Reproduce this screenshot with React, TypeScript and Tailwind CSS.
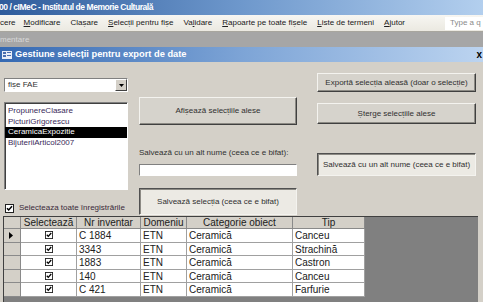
import React from 'react';

const rows = [
  { nr: 'C 1884', dom: 'ETN', cat: 'Ceramică', tip: 'Canceu' },
  { nr: '3343', dom: 'ETN', cat: 'Ceramică', tip: 'Strachină' },
  { nr: '1883', dom: 'ETN', cat: 'Ceramică', tip: 'Castron' },
  { nr: '140', dom: 'ETN', cat: 'Ceramică', tip: 'Canceu' },
  { nr: 'C 421', dom: 'ETN', cat: 'Ceramică', tip: 'Farfurie' },
];

const selections = ['PropunereClasare', 'PicturiGrigorescu', 'CeramicaExpozitie', 'BijuteriiArticol2007'];

const CheckMark = ({ size = 9 }: { size?: number }) => (
  <svg width={size} height={size} viewBox="0 0 9 9">
    <rect x="0.5" y="0.5" width="8" height="8" fill="#fff" stroke="#202020" />
    <path d="M2 4.2 L3.7 6 L7 2.3" fill="none" stroke="#000" strokeWidth="1.5" />
  </svg>
);

const RaisedButton = ({ label, className }: { label: string; className: string }) => (
  <div
    className={`flex items-center justify-center border border-t-[#f4f3ef] border-l-[#f4f3ef] border-b-[#404040] border-r-[#404040] bg-[#d6d3cc] text-[8px] text-[#303030] shadow-[inset_-1px_-1px_0_#8c8a84] ${className}`}
  >
    {label}
  </div>
);

const PressedButton = ({ label, className }: { label: string; className: string }) => (
  <div
    className={`flex items-center justify-center border border-t-[#505050] border-l-[#505050] border-b-[#f4f3ef] border-r-[#f4f3ef] bg-[#eceae4] text-[8px] text-[#303030] shadow-[inset_1px_1px_0_#8c8a84] ${className}`}
  >
    {label}
  </div>
);

export default function App() {
  return (
    <div
      className="flex h-[302px] w-[483px] flex-col overflow-hidden bg-[#d4d0c8]"
      style={{ fontFamily: '"Liberation Sans", Arial, sans-serif' }}
    >
      {/* app title bar */}
      <div className="flex h-[15px] items-center bg-gradient-to-r from-[#2f5c9c] via-[#6e98cc] to-[#b3cfee] text-[8.5px] font-bold tracking-[-0.45px] text-white">
        <span className="-ml-[1px]">00 / cIMeC - Institutul de Memorie Culturală</span>
      </div>

      {/* menu bar */}
      <div className="flex h-[17px] items-center border-b border-[#a8a69e] bg-gradient-to-b from-[#f7f6f2] to-[#ebe9e1] text-[8px] text-[#202020]">
        <span className="ml-[0px]">cere</span>
        <span className="ml-[8px]"><u>M</u>odificare</span>
        <span className="ml-[10px]">Clașare</span>
        <span className="ml-[10px]"><u>S</u>elecții pentru fișe</span>
        <span className="ml-[10px]">Va<u>l</u>idare</span>
        <span className="ml-[10px]"><u>R</u>apoarte pe toate fișele</span>
        <span className="ml-[10px]"><u>L</u>iste de termeni</span>
        <span className="ml-[10px]"><u>A</u>jutor</span>
        <div className="ml-auto flex h-[13px] w-[38px] items-center bg-white pl-[5px] text-[#8a8a8a]">Type a q</div>
      </div>

      {/* documentation strip */}
      <div className="flex h-[15px] items-center bg-[#a6a6a6] text-[8px] text-[#d8d8d8]">
        <span>mentare</span>
      </div>

      {/* child window title */}
      <div className="flex h-[15px] items-center bg-gradient-to-r from-[#3569b2] via-[#7da4d6] to-[#bcd4f0] text-white">
        <svg width="10" height="8" viewBox="0 0 10 8" className="ml-[2px]">
          <rect x="0" y="0" width="10" height="8" fill="#e8eef8" />
          <rect x="1" y="1" width="3" height="2" fill="#4a6fb0" />
          <rect x="5" y="1" width="4" height="1" fill="#4a6fb0" />
          <rect x="1" y="4" width="3" height="2" fill="#4a6fb0" />
          <rect x="5" y="4" width="4" height="1" fill="#4a6fb0" />
        </svg>
        <span className="ml-[3px] text-[9.3px] font-bold">Gestiune selecții pentru export de date</span>
        <span className="ml-auto mr-[1px] text-[10px] font-bold leading-none text-black">x</span>
      </div>

      {/* form body */}
      <div className="flex h-[154px] text-[8px] text-[#303030]">
        <div className="ml-[4px] flex w-[124px] flex-col pt-[16px]">
          <div className="flex h-[14px] items-center border border-t-[#808080] border-l-[#808080] border-b-white border-r-white bg-white">
            <span className="flex-1 pl-[3px]">fișe FAE</span>
            <div className="flex h-[12px] w-[12px] items-center justify-center border border-t-white border-l-white border-b-[#404040] border-r-[#404040] bg-[#d4d0c8]">
              <svg width="5" height="3" viewBox="0 0 5 3"><path d="M0 0 H5 L2.5 3 Z" fill="#000" /></svg>
            </div>
          </div>
          <div className="mt-[10px] flex h-[88px] flex-col border border-t-[#808080] border-l-[#808080] border-b-white border-r-white bg-white pt-[3px] shadow-[inset_1px_1px_0_#404040]">
            {selections.map((s, i) => (
              <div
                key={s}
                className={`flex h-[10.5px] items-center pl-[3px] ${i === 2 ? 'bg-black text-white' : 'text-[#3a2a5a]'}`}
              >
                {s}
              </div>
            ))}
          </div>
          <div className="mt-[12px] flex items-center">
            <div className="ml-[1px]"><CheckMark size={9} /></div>
            <span className="ml-[5px] text-[#3a2a3a]">Selecteaza toate înregistrările</span>
          </div>
        </div>

        <div className="ml-[11px] flex w-[158px] flex-col pt-[35px]">
          <RaisedButton label="Afișează selecțiile alese" className="h-[28px]" />
          <span className="mt-[23px] h-[10px] leading-[10px]">Salvează cu un alt nume (ceea ce e bifat):</span>
          <div className="mt-[6px] h-[12px] border border-t-[#808080] border-l-[#808080] border-b-white border-r-white bg-white" />
          <PressedButton label="Salvează selecția (ceea ce e bifat)" className="mt-[12px] h-[27px]" />
        </div>

        <div className="ml-[20px] flex w-[159px] flex-col pt-[11px]">
          <RaisedButton label="Exportă selecția aleasă (doar o selecție)" className="h-[19px]" />
          <RaisedButton label="Șterge selecțiile alese" className="mt-[11px] h-[21px]" />
          <PressedButton label="Salvează cu un alt nume (ceea ce e bifat)" className="mt-[29px] h-[23px]" />
        </div>
      </div>

      {/* datasheet */}
      <div className="ml-[3px] mr-[5px] flex flex-1 border-l border-t border-[#404040] bg-[#808080] text-[10px] text-[#202020]">
        <div className="flex w-[361px] flex-col self-start">
          <div className="flex h-[12px] bg-[#d4d0c8] leading-[12px]">
            <div className="w-[17px] border-b border-r border-[#8a8a8a]" />
            <div className="w-[56px] border-b border-r border-[#8a8a8a] text-center">Selectează</div>
            <div className="w-[64px] border-b border-r border-[#8a8a8a] text-center">Nr inventar</div>
            <div className="w-[46px] border-b border-r border-[#8a8a8a] text-center">Domeniu</div>
            <div className="w-[106px] border-b border-r border-[#8a8a8a] text-center">Categorie obiect</div>
            <div className="w-[72px] border-b border-r border-[#8a8a8a] text-center">Tip</div>
          </div>
          {rows.map((r, i) => (
            <div key={i} className="flex h-[13.5px] leading-[13px]">
              <div className="flex w-[17px] items-center border-b border-r border-[#8a8a8a] bg-[#d4d0c8] pl-[5px]">
                {i === 0 && (
                  <svg width="4" height="7" viewBox="0 0 4 7"><path d="M0 0 L4 3.5 L0 7 Z" fill="#000" /></svg>
                )}
              </div>
              <div className="flex w-[56px] items-center justify-center border-b border-r border-[#a0a0a0] bg-white">
                <CheckMark size={8} />
              </div>
              <div className="w-[64px] border-b border-r border-[#a0a0a0] bg-white pl-[2px]">{r.nr}</div>
              <div className="w-[46px] border-b border-r border-[#a0a0a0] bg-white pl-[2px]">{r.dom}</div>
              <div className="w-[106px] border-b border-r border-[#a0a0a0] bg-white pl-[2px]">{r.cat}</div>
              <div className="w-[72px] border-b border-r border-[#a0a0a0] bg-white pl-[2px]">{r.tip}</div>
            </div>
          ))}
        </div>
      </div>
    </div>
  );
}
